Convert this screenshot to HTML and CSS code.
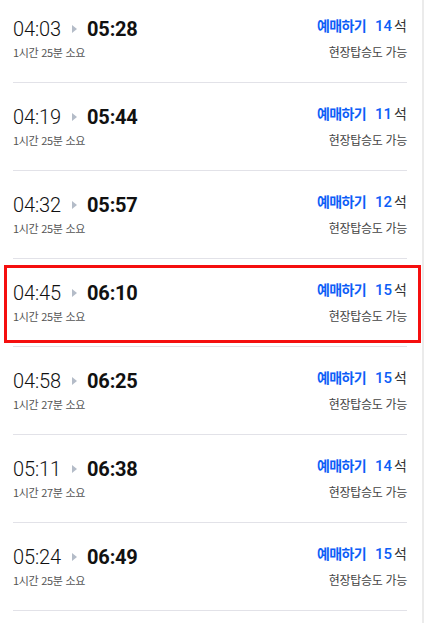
FILE: index.html
```html
<!DOCTYPE html>
<html lang="ko">
<head>
<meta charset="utf-8">
<title>시간표</title>
<link rel="stylesheet" href="styles.css">
</head>
<body>
<div class="page">
  <ul class="list">
    <li class="row">
      <div class="left">
        <div class="times"><span class="dep">04:03</span><span class="arrow"></span><span class="arr">05:28</span></div>
        <div class="dur">1시간 25분 소요</div>
      </div>
      <div class="right">
        <div class="seats"><span class="book">예매하기</span><span class="cnt">14</span><span class="unit">석</span></div>
        <div class="note">현장탑승도 가능</div>
      </div>
    </li>
    <li class="row">
      <div class="left">
        <div class="times"><span class="dep">04:19</span><span class="arrow"></span><span class="arr">05:44</span></div>
        <div class="dur">1시간 25분 소요</div>
      </div>
      <div class="right">
        <div class="seats"><span class="book">예매하기</span><span class="cnt">11</span><span class="unit">석</span></div>
        <div class="note">현장탑승도 가능</div>
      </div>
    </li>
    <li class="row">
      <div class="left">
        <div class="times"><span class="dep">04:32</span><span class="arrow"></span><span class="arr">05:57</span></div>
        <div class="dur">1시간 25분 소요</div>
      </div>
      <div class="right">
        <div class="seats"><span class="book">예매하기</span><span class="cnt">12</span><span class="unit">석</span></div>
        <div class="note">현장탑승도 가능</div>
      </div>
    </li>
    <li class="row highlight">
      <div class="left">
        <div class="times"><span class="dep">04:45</span><span class="arrow"></span><span class="arr">06:10</span></div>
        <div class="dur">1시간 25분 소요</div>
      </div>
      <div class="right">
        <div class="seats"><span class="book">예매하기</span><span class="cnt">15</span><span class="unit">석</span></div>
        <div class="note">현장탑승도 가능</div>
      </div>
    </li>
    <li class="row">
      <div class="left">
        <div class="times"><span class="dep">04:58</span><span class="arrow"></span><span class="arr">06:25</span></div>
        <div class="dur">1시간 27분 소요</div>
      </div>
      <div class="right">
        <div class="seats"><span class="book">예매하기</span><span class="cnt">15</span><span class="unit">석</span></div>
        <div class="note">현장탑승도 가능</div>
      </div>
    </li>
    <li class="row">
      <div class="left">
        <div class="times"><span class="dep">05:11</span><span class="arrow"></span><span class="arr">06:38</span></div>
        <div class="dur">1시간 27분 소요</div>
      </div>
      <div class="right">
        <div class="seats"><span class="book">예매하기</span><span class="cnt">14</span><span class="unit">석</span></div>
        <div class="note">현장탑승도 가능</div>
      </div>
    </li>
    <li class="row">
      <div class="left">
        <div class="times"><span class="dep">05:24</span><span class="arrow"></span><span class="arr">06:49</span></div>
        <div class="dur">1시간 25분 소요</div>
      </div>
      <div class="right">
        <div class="seats"><span class="book">예매하기</span><span class="cnt">15</span><span class="unit">석</span></div>
        <div class="note">현장탑승도 가능</div>
      </div>
    </li>
  </ul>
</div>
</body>
</html>
```
FILE: styles.css
```css
html, body {
  margin: 0;
  padding: 0;
  background: #fff;
}
body {
  font-family: "Roboto", "Noto Sans CJK KR", sans-serif;
  color: #111;
  overflow: hidden;
}
.page {
  width: 422px;
  height: 623px;
  border-right: 2px solid #ebebeb;
  overflow: hidden;
}
.list {
  list-style: none;
  margin: -5px 0 0 0;
  padding: 0;
}
.row {
  position: relative;
  display: flex;
  justify-content: space-between;
  align-items: flex-start;
  height: 87px;
  margin: 0 15px 0 13px;
  border-bottom: 1px solid #e2e2e8;
  box-sizing: content-box;
}
.left {
  padding-top: 22px;
}
.times {
  display: flex;
  align-items: center;
  height: 24px;
  line-height: 24px;
  font-size: 20px;
}
.dep {
  font-weight: 300;
  letter-spacing: -0.1px;
}
.arrow {
  width: 0;
  height: 0;
  border-top: 4px solid transparent;
  border-bottom: 4px solid transparent;
  border-left: 5px solid #b4bcc8;
  margin: 0 10px 0 11px;
}
.arr {
  font-weight: 700;
  letter-spacing: -0.2px;
}
.dur {
  margin-top: 4px;
  font-family: "Noto Sans CJK KR", sans-serif;
  font-size: 11px;
  line-height: 14px;
  color: #555;
  letter-spacing: -0.3px;
}
.right {
  padding-top: 20px;
  display: flex;
  flex-direction: column;
  align-items: flex-end;
}
.seats {
  display: flex;
  align-items: baseline;
  height: 20px;
  line-height: 20px;
}
.book {
  font-family: "Noto Sans CJK KR", sans-serif;
  font-weight: 700;
  font-size: 14px;
  color: #0d5ef7;
  letter-spacing: -0.6px;
}
.cnt {
  margin-left: 9px;
  font-size: 15px;
  font-weight: 500;
  color: #0d5ef7;
}
.unit {
  margin-left: 2px;
  font-family: "Noto Sans CJK KR", sans-serif;
  font-size: 14px;
  color: #333;
}
.note {
  margin-top: 9px;
  font-family: "Noto Sans CJK KR", sans-serif;
  font-size: 12px;
  line-height: 16px;
  color: #444;
  letter-spacing: -0.3px;
}
.highlight::after {
  content: "";
  position: absolute;
  left: -9px;
  right: -14px;
  top: 6px;
  bottom: 3px;
  border: 3px solid #f50f0f;
  pointer-events: none;
}
```
